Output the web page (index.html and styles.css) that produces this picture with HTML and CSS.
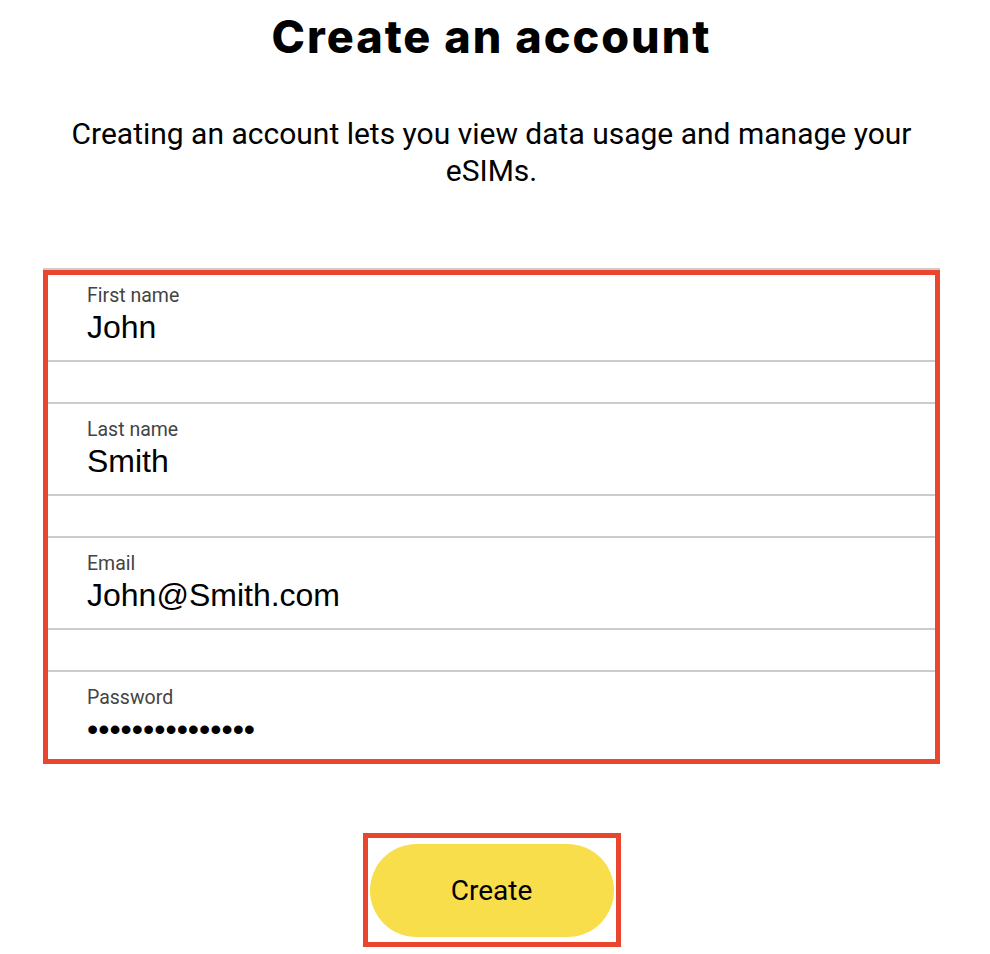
FILE: index.html
```html
<!DOCTYPE html>
<html lang="en">
<head>
    <meta charset="UTF-8">
    <meta name="viewport" content="width=device-width, initial-scale=1.0">
    <title>Create an account</title>
    <link rel="stylesheet" href="styles.css">
</head>
<body>
    <div class="signup-container">
        <h1 class="signup-title">Create an account</h1>
        <p class="signup-subtitle">Creating an account lets you view data usage and manage your eSIMs.</p>
        <form id="signupForm" class="signup-form">
            <div class="form-field">
                <label class="field-label" for="firstName">First name</label>
                <input type="text" class="field-input" id="firstName" value="John">
            </div>
            <div class="form-field">
                <label class="field-label" for="lastName">Last name</label>
                <input type="text" class="field-input" id="lastName" value="Smith">
            </div>
            <div class="form-field">
                <label class="field-label" for="email">Email</label>
                <input type="email" class="field-input" id="email" value="John@Smith.com">
            </div>
            <div class="form-field">
                <label class="field-label" for="password">Password</label>
                <input type="password" class="field-input" id="password" value="secretpassword1">
            </div>
            <div class="highlight-box"></div>
        </form>
        <div class="submit-row">
            <div class="submit-highlight">
                <button type="submit" form="signupForm" class="btn-create">Create</button>
            </div>
        </div>
    </div>
</body>
</html>
```

FILE: styles.css
```css
* {
    box-sizing: border-box;
}
body {
    margin: 0;
    background: #ffffff;
    color: #000000;
    font-family: Roboto, 'Noto Sans', sans-serif;
}
.signup-container {
    width: 897px;
    margin-left: 43px;
    padding-top: 11px;
}
.signup-title {
    margin: 0;
    font-family: Inter, sans-serif;
    font-size: 45px;
    font-weight: 800;
    line-height: 52px;
    letter-spacing: 2px;
    text-align: center;
}
.signup-subtitle {
    margin: 52px 0 0;
    font-size: 30px;
    line-height: 37px;
    text-align: center;
}
.signup-form {
    position: relative;
    margin-top: 79px;
    display: flex;
    flex-direction: column;
    gap: 40px;
}
.form-field {
    border-top: 2px solid #cccccc;
    border-bottom: 2px solid #cccccc;
    padding: 15px 44px 14px;
    height: 94px;
}
.field-label {
    display: block;
    font-size: 19.5px;
    line-height: 22px;
    color: #444444;
}
.field-input {
    display: block;
    width: 100%;
    margin-top: 1px;
    padding: 0;
    border: none;
    outline: none;
    background: transparent;
    font-family: 'Liberation Sans', Arial, sans-serif;
    font-size: 32px;
    line-height: 38px;
    height: 38px;
    color: #000000;
}
.highlight-box {
    position: absolute;
    top: 2px;
    left: 0;
    right: 0;
    bottom: 0;
    border: 5px solid #e9452f;
    pointer-events: none;
}
.submit-row {
    display: flex;
    justify-content: center;
    margin-top: 69px;
}
.submit-highlight {
    border: 5px solid #e9452f;
    padding: 6px 2px 5px;
}
.btn-create {
    display: flex;
    align-items: center;
    justify-content: center;
    width: 244px;
    height: 93px;
    border: none;
    border-radius: 47px;
    background: #f9de4b;
    color: #000000;
    font-family: Roboto, sans-serif;
    font-size: 28px;
    cursor: pointer;
}
```
